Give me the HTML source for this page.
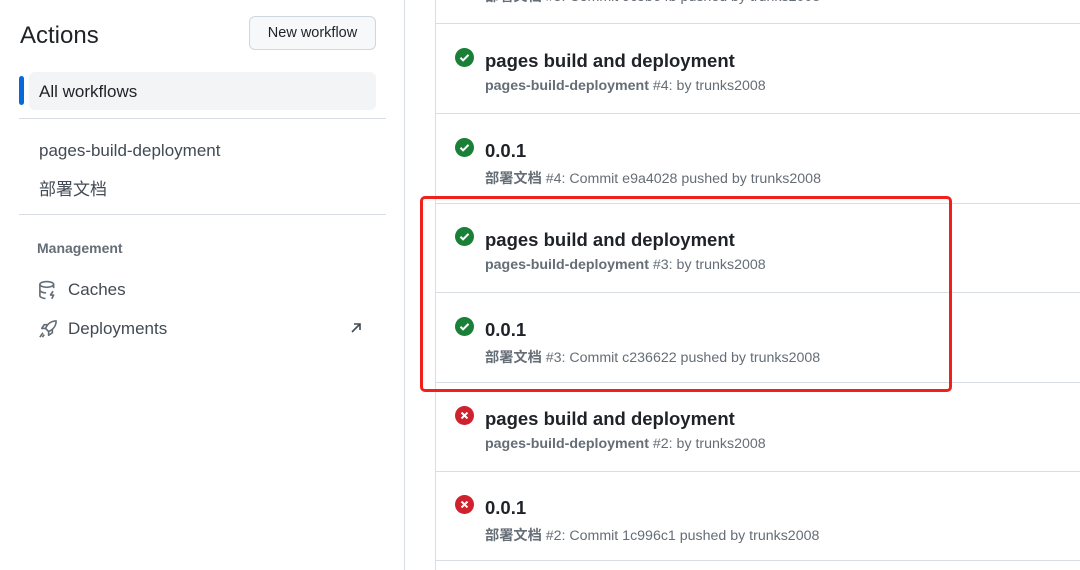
<!DOCTYPE html>
<html><head><meta charset="utf-8"><style>
*{margin:0;padding:0;box-sizing:border-box}
body{width:1080px;height:570px;overflow:hidden;background:#fff;font-family:"Liberation Sans","Noto Sans CJK SC",sans-serif;color:#1f2328;position:relative}
.a{position:absolute}
.side{left:0;top:0;width:405px;height:570px;border-right:1px solid #d8dee4}
.list{left:435px;top:0;width:660px;height:570px;border-left:1px solid #d8dee4}
.row{position:absolute;left:0;right:0;height:90px;border-bottom:1px solid #d8dee4}
.row .t{position:absolute;left:49px;top:26px;font-size:18.5px;font-weight:600;color:#1f2328;white-space:nowrap}
.row .s{position:absolute;left:49px;top:54px;font-size:14.2px;color:#656d76;white-space:nowrap}
.row .s b{font-weight:700}
.row svg{position:absolute;left:19px;top:24px}
.nav{font-size:17px;color:#1f2328}
</style></head><body>
<div class="a side">
 <div class="a" style="left:20px;top:22px;font-size:24px;color:#1f2328">Actions</div>
 <div class="a" style="left:249px;top:16px;width:127px;height:34px;border:1px solid #d0d7de;border-radius:6px;background:#f6f8fa;font-size:14.5px;text-align:center;line-height:32px">New workflow</div>
 <div class="a" style="left:19px;top:76px;width:5px;height:29px;background:#0969da;border-radius:3px"></div>
 <div class="a" style="left:29px;top:72px;width:347px;height:38px;background:#f3f4f6;border-radius:6px;font-size:17px;line-height:40px;padding-left:10px;font-weight:500">All workflows</div>
 <div class="a" style="left:19px;top:118px;width:367px;height:1px;background:#d8dee4"></div>
 <div class="a nav" style="left:39px;top:141px;color:#424a53">pages-build-deployment</div>
 <div class="a nav" style="left:39px;top:175px;color:#424a53">部署文档</div>
 <div class="a" style="left:19px;top:214px;width:367px;height:1px;background:#d8dee4"></div>
 <div class="a" style="left:37px;top:240px;font-size:14px;font-weight:600;color:#656d76">Management</div>
 <svg class="a" style="left:38px;top:280px" width="20" height="20" viewBox="0 0 16 16" fill="none" stroke="#656d76" stroke-width="1.3"><ellipse cx="7" cy="3.5" rx="5.5" ry="2.3"/><path d="M1.5 3.5v9c0 1.2 2.3 2.2 4.5 2.3M12.5 3.5v3M1.5 8c0 1.2 2.3 2.2 5 2.3"/><path d="M12 9l-2 3h2.5l-1.5 3" stroke-linejoin="round"/></svg>
 <div class="a nav" style="left:68px;top:280px;color:#424a53">Caches</div>
 <svg class="a" style="left:38px;top:319px" width="20" height="20" viewBox="0 0 16 16" fill="none" stroke="#656d76" stroke-width="1.3" stroke-linejoin="round"><path d="M14.5 1.5c-4 0-7 2.5-8.5 6l2.5 2.5c3.5-1.5 6-4.5 6-8.5z"/><path d="M6 7.5H3l2-3h3M8.5 10v3l3-2V8"/><path d="M4 11l-2.5 3.5M5 12.5l-1.5 2"/></svg>
 <div class="a nav" style="left:68px;top:319px;color:#424a53">Deployments</div>
 <svg class="a" style="left:349px;top:321px" width="14" height="14" viewBox="0 0 14 14" fill="none" stroke="#424a53" stroke-width="1.6"><path d="M3 11L11 3M5 3h6v6"/></svg>
</div>
<div class="a list">
 <div class="row" style="top:-66px"><div class="s" style="top:52px"><b>部署文档</b> #5: Commit 9c5b64b pushed by trunks2008</div></div>
 <div class="row" style="top:24px"><svg width="19" height="19" viewBox="0 0 16 16"><circle cx="8" cy="8" r="8" fill="#1a7f37"/><path d="M4.6 8.2l2.2 2.2 4.6-4.6" stroke="#fff" stroke-width="1.7" fill="none"/></svg><div class="t">pages build and deployment</div><div class="s"><b>pages-build-deployment</b> #4: by trunks2008</div></div>
 <div class="row" style="top:114px"><svg width="19" height="19" viewBox="0 0 16 16"><circle cx="8" cy="8" r="8" fill="#1a7f37"/><path d="M4.6 8.2l2.2 2.2 4.6-4.6" stroke="#fff" stroke-width="1.7" fill="none"/></svg><div class="t">0.0.1</div><div class="s"><b>部署文档</b> #4: Commit e9a4028 pushed by trunks2008</div></div>
 <div class="row" style="top:203px"><svg width="19" height="19" viewBox="0 0 16 16"><circle cx="8" cy="8" r="8" fill="#1a7f37"/><path d="M4.6 8.2l2.2 2.2 4.6-4.6" stroke="#fff" stroke-width="1.7" fill="none"/></svg><div class="t">pages build and deployment</div><div class="s"><b>pages-build-deployment</b> #3: by trunks2008</div></div>
 <div class="row" style="top:293px"><svg width="19" height="19" viewBox="0 0 16 16"><circle cx="8" cy="8" r="8" fill="#1a7f37"/><path d="M4.6 8.2l2.2 2.2 4.6-4.6" stroke="#fff" stroke-width="1.7" fill="none"/></svg><div class="t">0.0.1</div><div class="s"><b>部署文档</b> #3: Commit c236622 pushed by trunks2008</div></div>
 <div class="row" style="top:382px"><svg width="19" height="19" viewBox="0 0 16 16"><circle cx="8" cy="8" r="8" fill="#cf222e"/><path d="M5.5 5.5l5 5M10.5 5.5l-5 5" stroke="#fff" stroke-width="1.7"/></svg><div class="t">pages build and deployment</div><div class="s"><b>pages-build-deployment</b> #2: by trunks2008</div></div>
 <div class="row" style="top:471px"><svg width="19" height="19" viewBox="0 0 16 16"><circle cx="8" cy="8" r="8" fill="#cf222e"/><path d="M5.5 5.5l5 5M10.5 5.5l-5 5" stroke="#fff" stroke-width="1.7"/></svg><div class="t">0.0.1</div><div class="s"><b>部署文档</b> #2: Commit 1c996c1 pushed by trunks2008</div></div>
</div>
<div class="a" style="left:420px;top:196px;width:532px;height:196px;border:3px solid #f0211c;border-radius:5px"></div>
</body></html>
